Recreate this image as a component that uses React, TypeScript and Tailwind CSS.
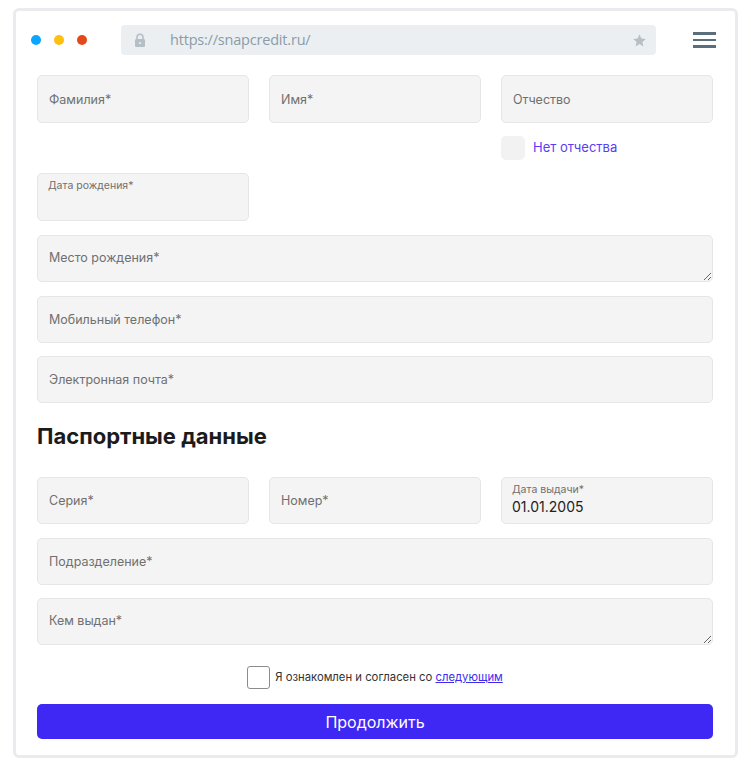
import React from "react";

const field =
  "w-full rounded-[5px] border border-[#e4e6e8] bg-[#f4f4f4] px-[11px] text-[12.5px] text-[#222] outline-none placeholder:text-[#707070]";

const Input = ({ label, tall }: { label: string; tall?: boolean }) => (
  <input className={`${field} ${tall ? "h-[48px]" : "h-[47px]"}`} placeholder={label} />
);

const Area = ({ label }: { label: string }) => (
  <textarea
    className={`${field} block h-[47px] resize-y pt-[13px] leading-[18px]`}
    placeholder={label}
  />
);

const SmallLabelField = ({ label, value, tall }: { label: string; value?: string; tall?: boolean }) => (
  <div
    className={`w-full rounded-[5px] border border-[#e4e6e8] bg-[#f4f4f4] px-[10px] pt-[5px] ${
      tall ? "h-[48px]" : "h-[47px]"
    }`}
  >
    <div className="text-[10.5px] leading-[14px] text-[#707070]">{label}</div>
    {value && <div className="mt-[1px] text-[14px] leading-[18px] text-[#222]">{value}</div>}
  </div>
);

const App: React.FC = () => {
  return (
    <div className="h-[760px] w-[751px] bg-white pl-[13px] pt-[8px]" style={{ fontFamily: "Inter, 'Noto Sans', sans-serif" }}>
      <div className="h-[750px] w-[725px] rounded-[6px] border-[3px] border-[#e9ebee] bg-white">
        {/* browser bar */}
        <div className="mt-[14px] flex h-[30px] items-center pl-[15px]">
          <div className="flex gap-[13px]">
            <span className="size-[10px] rounded-full bg-[#0aa6ff]" />
            <span className="size-[10px] rounded-full bg-[#ffbf0f]" />
            <span className="size-[10px] rounded-full bg-[#e4491c]" />
          </div>
          <div className="ml-[34px] flex h-[30px] w-[535px] items-center rounded-[4px] bg-[#eceff2] pl-[13px] pr-[9px]">
            <svg width="12" height="14" viewBox="0 0 12 14" className="text-[#b4bfc6]">
              <path d="M3 6V4.2a3 3 0 0 1 6 0V6" fill="none" stroke="currentColor" strokeWidth="1.6" />
              <rect x="1" y="6" width="10" height="8" rx="1.2" fill="currentColor" />
              <circle cx="6" cy="10" r="1.1" fill="#eceff2" />
            </svg>
            <span className="ml-[24px] text-[14.5px] tracking-[-0.2px] text-[#8a9ca7]" style={{ fontFamily: "'Open Sans', sans-serif" }}>
              https://snapcredit.ru/
            </span>
            <svg width="15" height="15" viewBox="0 0 24 24" className="ml-auto text-[#b4bfc6]">
              <path fill="currentColor" d="M12 2l2.9 6.9 7.1.6-5.4 4.7 1.7 7.3L12 17.6 5.7 21.5l1.7-7.3L2 9.5l7.1-.6z" />
            </svg>
          </div>
          <div className="ml-[37px] flex w-[23px] flex-col gap-[4px]">
            <span className="h-[2.5px] bg-[#5b6e7b]" />
            <span className="h-[2.5px] bg-[#5b6e7b]" />
            <span className="h-[2.5px] bg-[#5b6e7b]" />
          </div>
        </div>

        {/* form */}
        <div className="ml-[21px] mt-[20px] w-[676px]">
          <div className="grid grid-cols-3 gap-[20px]">
            <Input label="Фамилия*" tall />
            <Input label="Имя*" tall />
            <Input label="Отчество" tall />
          </div>
          <div className="mt-[13px] grid grid-cols-3 gap-[20px]">
            <div />
            <div />
            <label className="flex items-center gap-[8px]">
              <span className="size-[24px] rounded-[5px] bg-[#f2f2f2]" />
              <span className="text-[13px] text-[#5a3df5]">Нет отчества</span>
            </label>
          </div>
          <div className="mt-[13px] grid grid-cols-3 gap-[20px]">
            <SmallLabelField label="Дата рождения*" tall />
          </div>
          <div className="mt-[14px]">
            <Area label="Место рождения*" />
          </div>
          <div className="mt-[14px]">
            <Input label="Мобильный телефон*" />
          </div>
          <div className="mt-[13px]">
            <Input label="Электронная почта*" />
          </div>

          <h2 className="mt-[19px] text-[22px] font-bold leading-[28px] text-[#1b1b1b]">
            Паспортные данные
          </h2>

          <div className="mt-[27px] grid grid-cols-3 gap-[20px]">
            <Input label="Серия*" />
            <Input label="Номер*" />
            <SmallLabelField label="Дата выдачи*" value="01.01.2005" />
          </div>
          <div className="mt-[14px]">
            <Input label="Подразделение*" />
          </div>
          <div className="mt-[13px]">
            <Area label="Кем выдан*" />
          </div>

          <div className="mt-[21px] flex items-center justify-center gap-[5px]">
            <span className="size-[23px] rounded-[3px] border border-[#8c8c8c] bg-white" />
            <span className="text-[11.3px] text-[#333]">
              Я ознакомлен и согласен со{" "}
              <a href="#" className="text-[#3d2cf0] underline">
                следующим
              </a>
            </span>
          </div>

          <button className="mt-[15px] flex h-[35px] w-full items-center justify-center rounded-[5px] bg-[#3f28f4] text-[16px] text-white">
            Продолжить
          </button>
        </div>
      </div>
    </div>
  );
};

export default App;
